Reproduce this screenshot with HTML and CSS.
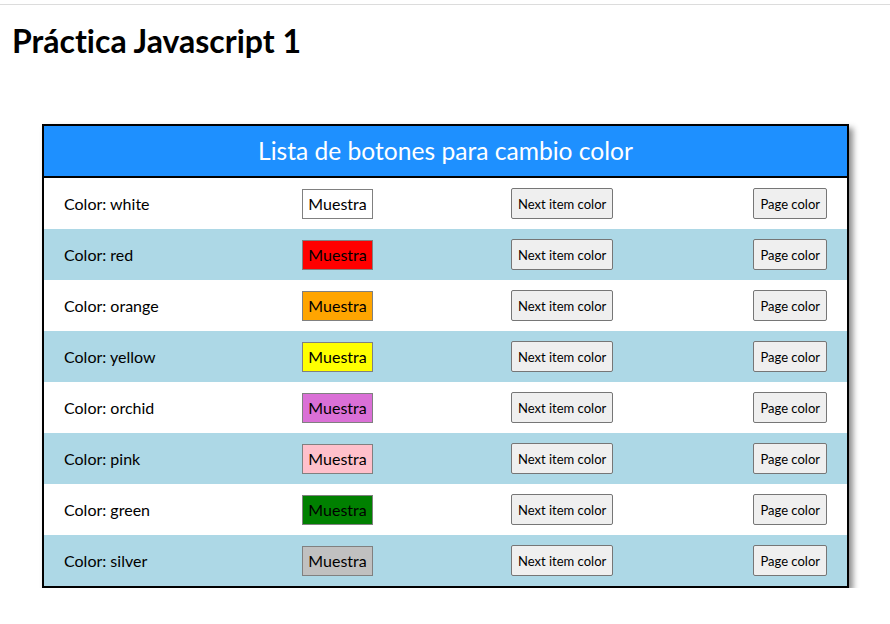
FILE: index.html
```html
<!DOCTYPE html>
<html lang="es">
<head>
<meta charset="utf-8">
<title>Práctica Javascript 1</title>
<link rel="stylesheet" href="styles.css">
</head>
<body>
<div class="topline"></div>
<h1 class="title">Práctica Javascript 1</h1>
<div class="panel">
  <div class="panel-head">Lista de botones para cambio color</div>
  <div class="row">
    <span class="label">Color: white</span>
    <span class="sample" style="background: white">Muestra</span>
    <button class="btn next">Next item color</button>
    <button class="btn page">Page color</button>
  </div>
  <div class="row alt">
    <span class="label">Color: red</span>
    <span class="sample" style="background: red">Muestra</span>
    <button class="btn next">Next item color</button>
    <button class="btn page">Page color</button>
  </div>
  <div class="row">
    <span class="label">Color: orange</span>
    <span class="sample" style="background: orange">Muestra</span>
    <button class="btn next">Next item color</button>
    <button class="btn page">Page color</button>
  </div>
  <div class="row alt">
    <span class="label">Color: yellow</span>
    <span class="sample" style="background: yellow">Muestra</span>
    <button class="btn next">Next item color</button>
    <button class="btn page">Page color</button>
  </div>
  <div class="row">
    <span class="label">Color: orchid</span>
    <span class="sample" style="background: orchid">Muestra</span>
    <button class="btn next">Next item color</button>
    <button class="btn page">Page color</button>
  </div>
  <div class="row alt">
    <span class="label">Color: pink</span>
    <span class="sample" style="background: pink">Muestra</span>
    <button class="btn next">Next item color</button>
    <button class="btn page">Page color</button>
  </div>
  <div class="row">
    <span class="label">Color: green</span>
    <span class="sample" style="background: green">Muestra</span>
    <button class="btn next">Next item color</button>
    <button class="btn page">Page color</button>
  </div>
  <div class="row alt">
    <span class="label">Color: silver</span>
    <span class="sample" style="background: silver">Muestra</span>
    <button class="btn next">Next item color</button>
    <button class="btn page">Page color</button>
  </div>
</div>
</body>
</html>
```
FILE: styles.css
```css
html, body {
  margin: 0;
  padding: 0;
  background: #ffffff;
}
body {
  font-family: Lato, "Liberation Sans", sans-serif;
  color: #000;
  padding-top: 4px;
  font-variant-ligatures: none;
}
.topline {
  height: 1px;
  background: #dcdcdc;
}
.title {
  margin: 17px 0 0 12px;
  font-size: 32px;
  font-weight: 700;
  line-height: 38px;
}
.panel {
  width: 803px;
  margin: 64px 0 0 42px;
  border: 2px solid #000;
  box-shadow: 4px 4px 6px rgba(0, 0, 0, 0.45);
}
.panel-head {
  background: #1e90ff;
  color: #fff;
  height: 50px;
  line-height: 50px;
  text-align: center;
  font-size: 24.6px;
  border-bottom: 2px solid #000;
}
.row {
  display: grid;
  grid-template-columns: 238px 209px 241px 1fr;
  align-items: center;
  height: 51px;
  padding: 0 20px;
  background: #fff;
}
.row.alt {
  background: #add8e6;
}
.label {
  font-size: 16px;
}
.sample {
  justify-self: start;
  box-sizing: border-box;
  width: 71px;
  height: 30px;
  line-height: 28px;
  text-align: center;
  border: 1px solid #808080;
  font-size: 16px;
}
.btn {
  font-family: Lato, "Liberation Sans", sans-serif;
  font-variant-ligatures: none;
  font-size: 13px;
  height: 31px;
  padding: 0 6px;
  background: #efefef;
  border: 1px solid #767676;
  border-radius: 2px;
  color: #000;
}
.next {
  justify-self: start;
}
.page {
  justify-self: end;
}
```
